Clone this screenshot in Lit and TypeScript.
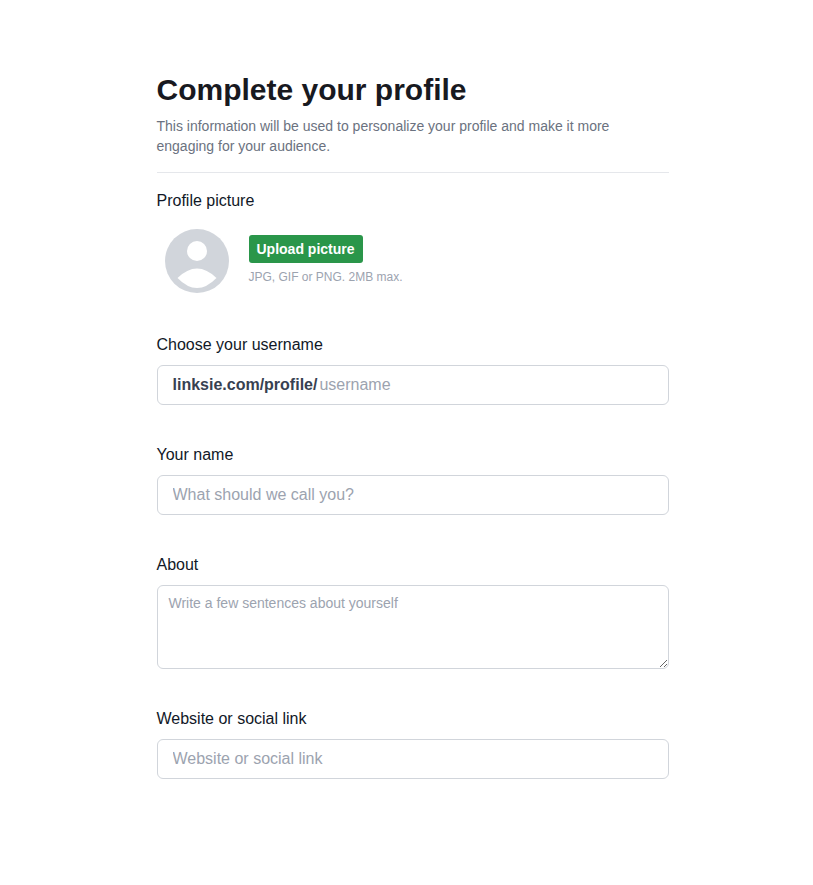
import { LitElement, html, css } from "lit";
import { customElement } from "lit/decorators.js";

@customElement("app-root")
export class AppRoot extends LitElement {
  static styles = css`
    :host {
      display: block;
      font-family: "Liberation Sans", Arial, sans-serif;
      color: #111827;
      background: #fff;
      min-height: 885px;
    }
    * { box-sizing: border-box; }
    .page {
      width: 512px;
      margin-left: 156.5px;
      padding-top: 72px;
      display: flex;
      flex-direction: column;
    }
    h1 {
      margin: 0;
      font-size: 30px;
      line-height: 36px;
      font-weight: 700;
      color: #18191f;
    }
    .sub {
      margin: 8px 0 0;
      font-size: 14px;
      line-height: 20px;
      color: #6b7280;
    }
    hr {
      margin: 16px 0 0;
      border: 0;
      border-top: 1px solid #e5e7eb;
      width: 100%;
    }
    label {
      display: block;
      font-size: 16px;
      line-height: 24px;
      color: #111827;
    }
    .pic-label { margin-top: 16px; }
    .pic {
      display: flex;
      align-items: center;
      gap: 20px;
      margin-top: 16px;
      padding-left: 8px;
    }
    .avatar { width: 64px; height: 64px; display: block; flex: none; }
    .pic-text { padding-bottom: 2px; }
    .upload {
      display: block;
      height: 28px;
      padding: 0 8px;
      border: 0;
      border-radius: 3px;
      background: #2a964a;
      color: #fff;
      font: 700 14px/28px "Liberation Sans", Arial, sans-serif;
    }
    .hint {
      margin: 6px 0 0;
      font-size: 12px;
      line-height: 16px;
      color: #9ca3af;
    }
    .field { margin-top: 38px; display: flex; flex-direction: column; gap: 8px; }
    .field.first { margin-top: 40px; }
    .box {
      display: flex;
      align-items: center;
      width: 100%;
      height: 40px;
      padding: 0 15px;
      border: 1px solid #d1d5db;
      border-radius: 6px;
      background: #fff;
      font: 16px/24px "Liberation Sans", Arial, sans-serif;
      color: #111827;
      outline: none;
    }
    input.box::placeholder, textarea::placeholder, .inner::placeholder { color: #9ca3af; opacity: 1; }
    .prefix { font-weight: 700; color: #374151; white-space: nowrap; }
    .inner {
      flex: 1;
      min-width: 0;
      border: 0;
      outline: none;
      padding: 0 0 0 2px;
      font: 16px/24px "Liberation Sans", Arial, sans-serif;
      background: transparent;
    }
    textarea {
      display: block;
      width: 100%;
      height: 84px;
      padding: 7px 11px;
      border: 1px solid #d1d5db;
      border-radius: 6px;
      font: 14px/20px "Liberation Sans", Arial, sans-serif;
      outline: none;
      resize: vertical;
    }
  `;

  render() {
    return html`
      <div class="page">
        <h1>Complete your profile</h1>
        <p class="sub">This information will be used to personalize your profile and make it more engaging for your audience.</p>
        <hr />
        <label class="pic-label">Profile picture</label>
        <div class="pic">
          <svg class="avatar" viewBox="0 0 64 64" aria-hidden="true">
            <circle cx="32" cy="32" r="32" fill="#d1d5db"></circle>
            <circle cx="32" cy="22" r="10" fill="#fff"></circle>
            <path d="M12.5 49 Q32 30 51.5 49 Q32 69 12.5 49 Z" fill="#fff"></path>
          </svg>
          <div class="pic-text">
            <button class="upload">Upload picture</button>
            <p class="hint">JPG, GIF or PNG. 2MB max.</p>
          </div>
        </div>
        <div class="field first">
          <label>Choose your username</label>
          <div class="box"><span class="prefix">linksie.com/profile/</span><input class="inner" placeholder="username" /></div>
        </div>
        <div class="field">
          <label>Your name</label>
          <input class="box" placeholder="What should we call you?" />
        </div>
        <div class="field">
          <label>About</label>
          <textarea placeholder="Write a few sentences about yourself"></textarea>
        </div>
        <div class="field">
          <label>Website or social link</label>
          <input class="box" placeholder="Website or social link" />
        </div>
      </div>
    `;
  }
}
